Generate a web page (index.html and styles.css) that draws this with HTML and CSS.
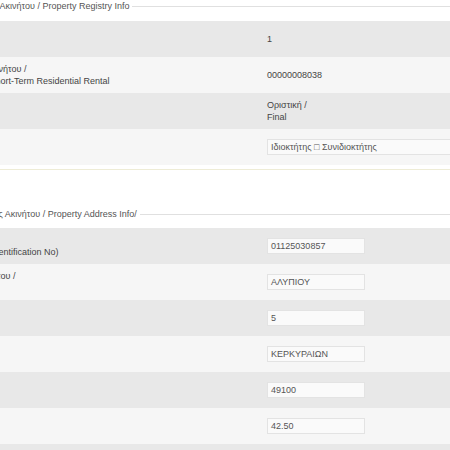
FILE: index.html
```html
<!DOCTYPE html>
<html lang="el">
<head>
  <meta charset="UTF-8" />
  <title>Στοιχεία Ακινήτου</title>
  <link rel="stylesheet" href="styles.css">
</head>
<body>

  <div class="page">

    <fieldset class="group">
      <legend>Στοιχεία Εγγραφής Ακινήτου / Property Registry Info</legend>
      <div class="row">
        <div class="lbl">Α/Α /<br>S/N</div>
        <div class="val">1</div>
      </div>
      <div class="row">
        <div class="lbl">Κατηγορία Χρήσης Ακινήτου /<br>Property Category / Short-Term Residential Rental</div>
        <div class="val">00000008038</div>
      </div>
      <div class="row">
        <div class="lbl">Κατάσταση /<br>Status</div>
        <div class="val">Οριστική /<br>Final</div>
      </div>
      <div class="row">
        <div class="lbl">Ιδιότητα /<br>Capacity</div>
        <div class="val"><span class="box box-wide">Ιδιοκτήτης □ Συνιδιοκτήτης</span></div>
      </div>
    </fieldset>

    <fieldset class="group">
      <legend>Στοιχεία Διεύθυνσης Ακινήτου / Property Address Info/</legend>
      <div class="row">
        <div class="lbl">Α.Τ.Α.Κ. /<br>Α.Τ.Α.Κ. – (Property Identification No)</div>
        <div class="val"><span class="box">01125030857</span></div>
      </div>
      <div class="row">
        <div class="lbl">Ονομασία Οδού Ακινήτου /<br>Street</div>
        <div class="val"><span class="box">ΑΛΥΠΙΟΥ</span></div>
      </div>
      <div class="row">
        <div class="lbl">Αριθμός /<br>Number</div>
        <div class="val"><span class="box">5</span></div>
      </div>
      <div class="row">
        <div class="lbl">Περιοχή /<br>Area</div>
        <div class="val"><span class="box">ΚΕΡΚΥΡΑΙΩΝ</span></div>
      </div>
      <div class="row">
        <div class="lbl">Τ.Κ. /<br>Postal Code</div>
        <div class="val"><span class="box">49100</span></div>
      </div>
      <div class="row">
        <div class="lbl">Εμβαδόν /<br>Area (m²)</div>
        <div class="val"><span class="box">42.50</span></div>
      </div>
      <div class="row">
        <div class="lbl">Όροφος /<br>Floor</div>
        <div class="val"><span class="box">1</span></div>
      </div>
    </fieldset>

  </div>

</body>
</html>
```

FILE: styles.css
```css
* { box-sizing: border-box; }

html, body {
  margin: 0;
  padding: 0;
  overflow: hidden;
  background: #fff;
}

body {
  font-family: "Liberation Sans", Arial, sans-serif;
  font-size: 9px;
  color: #444;
}

/* the form is wider than the window, its left edge sits off screen */
.page {
  margin-left: -100px;
  width: 760px;
}

.group {
  margin: 0;
  padding: 8px 0 4px;
  border: 1px solid #e0e0e0;
  border-bottom-color: #eeecd6;
}

.group + .group {
  margin-top: 38px;
  padding-top: 7px;
}

.group legend {
  margin-left: 19px;
  padding: 0 3px;
  line-height: 13px;
  color: #555;
}

.row {
  display: grid;
  grid-template-columns: 366px 1fr;
  align-items: center;
  height: 36px;
  background: #e8e8e8;
}

.row:nth-of-type(even) {
  background: #f6f6f6;
}

.lbl {
  padding-left: 8px;
  line-height: 12px;
}

.val {
  line-height: 12px;
}

.box {
  display: block;
  width: 98px;
  height: 16px;
  line-height: 14px;
  padding: 0 3px;
  border: 1px solid #e3e3e3;
  background: #fafafa;
  color: #555;
  white-space: nowrap;
}

.box-wide {
  width: 320px;
}
```
